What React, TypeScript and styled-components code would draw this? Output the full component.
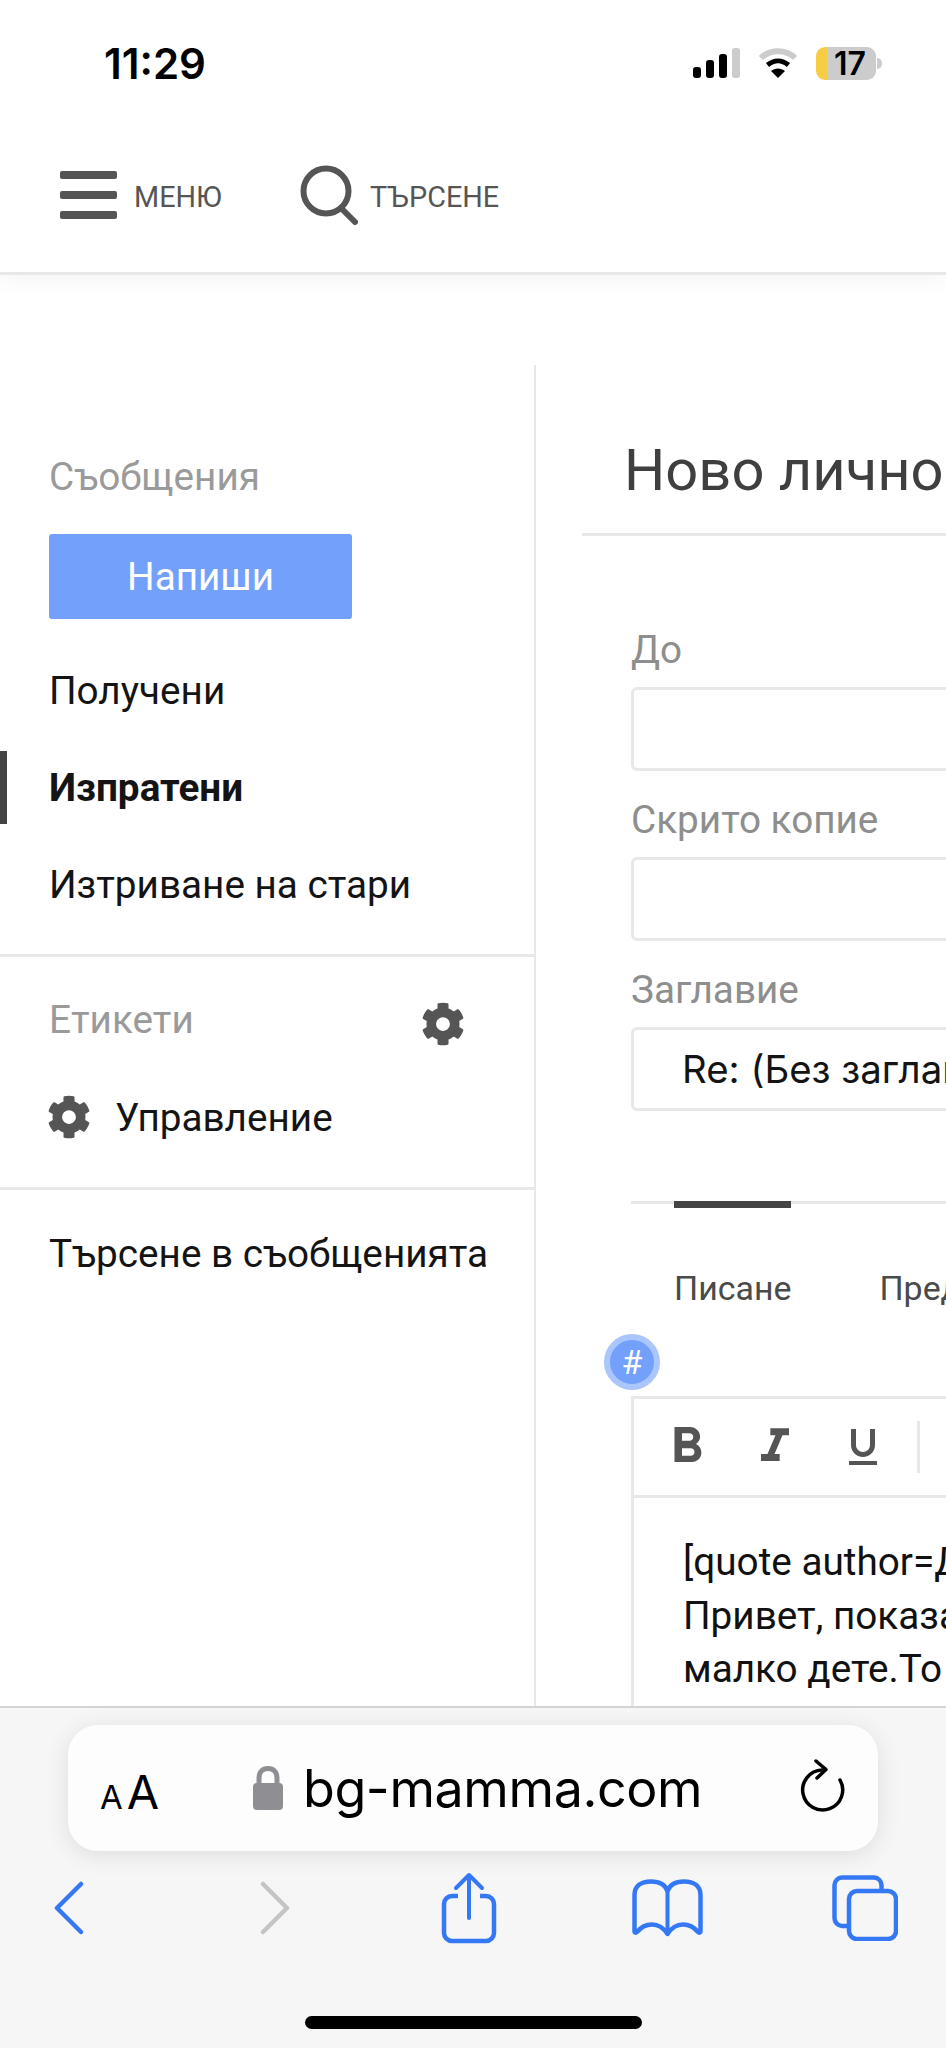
import React from "react";
import styled, { createGlobalStyle } from "styled-components";
import { FaCog } from "react-icons/fa";
import { MdFormatBold, MdFormatItalic, MdFormatUnderlined } from "react-icons/md";

const BLUE = "#3478f6";
const LINE = "#e8e8e8";

const GlobalStyle = createGlobalStyle`
  html, body {
    margin: 0;
    padding: 0;
    background: #ffffff;
    overflow: hidden;
  }
  body {
    font-family: Roboto, "Noto Sans", sans-serif;
    color: #141414;
  }
`;

const Page = styled.div`
  width: 946px;
  height: 2048px;
  display: flex;
  flex-direction: column;
  overflow: hidden;
`;

const TopArea = styled.header`
  position: relative;
  z-index: 1;
  height: 272px;
  flex: none;
  background: #ffffff;
  border-bottom: 3px solid ${LINE};
  box-shadow: 0 4px 24px rgba(0, 0, 0, 0.05);
`;

const StatusBar = styled.div`
  height: 126px;
  display: flex;
  align-items: center;
  padding: 0 70px 0 104px;
  box-sizing: border-box;
`;

const Time = styled.div`
  font-family: Inter, sans-serif;
  font-weight: 600;
  font-size: 42px;
  color: #000;
`;

const StatusIcons = styled.div`
  margin-left: auto;
  display: flex;
  align-items: center;
  gap: 18px;
`;

const Battery = styled.div`
  position: relative;
  width: 60px;
  height: 33px;
  border-radius: 9px;
  background: linear-gradient(90deg, #f7cd45 11px, #cccccc 11px);
  display: flex;
  align-items: center;
  justify-content: center;
  padding-left: 8px;
  box-sizing: border-box;
  font-family: Inter, sans-serif;
  font-weight: 600;
  font-size: 32px;
  color: #000;

  &::after {
    content: "";
    position: absolute;
    right: -6px;
    top: 11px;
    width: 5px;
    height: 11px;
    border-radius: 0 5px 5px 0;
    background: #cccccc;
  }
`;

const Nav = styled.nav`
  height: 146px;
  display: flex;
  align-items: center;
  padding: 0 0 8px 60px;
  box-sizing: border-box;
`;

const NavItem = styled.div<{ $gap: number; $width: number }>`
  display: flex;
  align-items: center;
  gap: ${(p) => p.$gap}px;
  width: ${(p) => p.$width}px;
  flex: none;
`;

const NavLabel = styled.span`
  font-size: 28.8px;
  color: #555555;
  padding-top: 4px;
`;

const Body = styled.div`
  flex: 1;
  min-height: 0;
  display: flex;
  padding-top: 90px;
  overflow: hidden;
`;

const Sidebar = styled.aside`
  width: 536px;
  flex: none;
  box-sizing: border-box;
  border-right: 2px solid ${LINE};
`;

const SideSection = styled.section`
  padding-bottom: 21px;
  border-bottom: 3px solid ${LINE};
`;

const SectionTitle = styled.div<{ $top: number }>`
  font-size: 38.7px;
  line-height: 44px;
  color: #9a9a9a;
  padding: ${(p) => p.$top}px 0 0 49px;
`;

const WriteButton = styled.div`
  width: 303px;
  height: 85px;
  margin: 35px 0 23px 49px;
  border-radius: 3px;
  background: #72a0fb;
  color: #ffffff;
  font-size: 38.7px;
  display: flex;
  align-items: center;
  justify-content: center;
`;

const SideLink = styled.div<{ $active?: boolean; $height?: number; $top?: number }>`
  height: ${(p) => p.$height ?? 97}px;
  box-sizing: border-box;
  padding: ${(p) => p.$top ?? 0}px 0 0 49px;
  display: flex;
  align-items: center;
  gap: 24px;
  font-size: 38.7px;
  font-weight: ${(p) => (p.$active ? 700 : 400)};
  position: relative;

  &::before {
    content: "";
    display: ${(p) => (p.$active ? "block" : "none")};
    position: absolute;
    left: 0;
    top: 12px;
    bottom: 12px;
    width: 7px;
    background: #444444;
  }
`;

const LabelRow = styled.div`
  display: flex;
  align-items: flex-start;
  justify-content: space-between;
  padding-right: 69px;
`;

const HeadGear = styled(FaCog)`
  margin-top: 45px;
  color: #555555;
`;

const LinkGear = styled(FaCog)`
  margin-left: -2px;
  color: #555555;
`;

const LabelsSection = styled.section`
  border-bottom: 3px solid ${LINE};
`;

const Main = styled.main`
  flex: 1;
  min-width: 0;
  overflow: hidden;
  padding: 74px 0 0 46px;
`;

const Title = styled.h1`
  margin: 0;
  height: 97px;
  box-sizing: border-box;
  width: 600px;
  font-size: 57.9px;
  line-height: 62px;
  font-weight: 400;
  white-space: nowrap;
  color: #3f3f3f;
  padding: 0 0 0 42px;
  border-bottom: 3px solid ${LINE};
`;

const Form = styled.form`
  margin-left: 49px;
  width: 600px;
  padding-top: 94px;
`;

const Field = styled.div`
  margin-bottom: 29px;
`;

const FieldLabel = styled.label`
  display: block;
  font-size: 38.7px;
  line-height: 40px;
  margin-bottom: 17px;
  color: #8e8e8e;
`;

const InputBox = styled.div`
  height: 84px;
  box-sizing: border-box;
  border: 3px solid ${LINE};
  border-radius: 6px;
  display: flex;
  align-items: center;
  padding-left: 48px;
  font-family: Inter, sans-serif;
  font-size: 38.4px;
  white-space: nowrap;
  overflow: hidden;
`;

const TabRow = styled.div`
  display: flex;
  gap: 88px;
  margin-top: 90px;
  padding-left: 43px;
  border-top: 3px solid ${LINE};
`;

const Tab = styled.div<{ $active?: boolean }>`
  margin-top: -3px;
  padding-top: 61px;
  font-size: 33.9px;
  line-height: 40px;
  white-space: nowrap;
  color: #4a4a4a;
  border-top: 7px solid ${(p) => (p.$active ? "#444444" : "transparent")};
`;

const Editor = styled.div`
  position: relative;
  margin-top: 87px;
  border: 3px solid ${LINE};
  border-right: none;
  height: 500px;
`;

const HashBadge = styled.div`
  position: absolute;
  left: -30px;
  top: -65px;
  width: 44px;
  height: 44px;
  border-radius: 50%;
  border: 6px solid #aac6fc;
  background: #72a0fb;
  color: #ffffff;
  font-size: 34px;
  display: flex;
  align-items: center;
  justify-content: center;
`;

const Toolbar = styled.div`
  height: 96px;
  display: flex;
  align-items: center;
  padding-left: 9px;
  border-bottom: 3px solid ${LINE};
`;

const ToolButton = styled.div`
  width: 88px;
  display: flex;
  justify-content: center;
  color: #555555;
`;

const ToolDivider = styled.div`
  width: 3px;
  height: 52px;
  margin-left: 10px;
  background: ${LINE};
`;

const EditorText = styled.div`
  padding: 37px 0 0 49px;
  font-size: 38.7px;
  line-height: 53.5px;
  white-space: nowrap;
  color: #111111;
`;

const SafariBar = styled.footer`
  position: relative;
  z-index: 2;
  height: 342px;
  flex: none;
  box-sizing: border-box;
  border-top: 2px solid #d4d4d4;
  background: #f6f6f6;
  padding-top: 17px;
  display: flex;
  flex-direction: column;
`;

const UrlPill = styled.div`
  width: 810px;
  height: 126px;
  margin-left: 68px;
  box-sizing: border-box;
  padding: 0 33px 0 32px;
  border-radius: 30px;
  background: #fdfdfd;
  box-shadow: 0 4px 24px rgba(0, 0, 0, 0.1);
  display: flex;
  align-items: center;
  justify-content: space-between;
  color: #000;
`;

const TextSize = styled.div`
  display: flex;
  align-items: baseline;
  gap: 4px;
  font-family: Inter, sans-serif;
  font-size: 47px;
  padding-top: 6px;
`;

const SmallA = styled.span`
  font-size: 33px;
`;

const Address = styled.div`
  display: flex;
  align-items: center;
  gap: 20px;
  margin-right: 4px;
  font-family: Inter, sans-serif;
  font-size: 52px;
  letter-spacing: -0.4px;
`;

const ReloadSlot = styled.div`
  display: flex;
  margin-top: -5px;
`;

const BrowserActions = styled.div`
  display: grid;
  grid-template-columns: 138px 274px 114px 282px 114px;
  justify-items: center;
  align-items: center;
  height: 76px;
  margin-top: 19px;
`;

const HomeIndicator = styled.div`
  width: 337px;
  height: 13px;
  margin: auto 0 19px 305px;
  border-radius: 7px;
  background: #000;
`;

const SignalIcon = () => (
  <svg width="47" height="30" viewBox="0 0 47 30">
    <rect x="0" y="19" width="8" height="11" rx="3" fill="#000" />
    <rect x="13" y="12" width="8" height="18" rx="3" fill="#000" />
    <rect x="26" y="6" width="8" height="24" rx="3" fill="#000" />
    <rect x="39" y="0" width="8" height="30" rx="3" fill="#ccc" />
  </svg>
);

const WifiIcon = () => (
  <svg width="40" height="30" viewBox="0 0 40 30">
    <path d="M3 10C12 1 28 1 37 10" fill="none" stroke="#ccc" strokeWidth="6" />
    <path d="M9.5 17C16 11.5 24 11.5 30.5 17" fill="none" stroke="#000" strokeWidth="5" />
    <path d="M20 30L13 23C17 19.5 23 19.5 27 23Z" fill="#000" />
  </svg>
);

const MenuIcon = () => (
  <svg width="57" height="48" viewBox="0 0 57 48">
    <rect x="0" y="0" width="57" height="8" rx="2" fill="#555" />
    <rect x="0" y="20" width="57" height="8" rx="2" fill="#555" />
    <rect x="0" y="40" width="57" height="8" rx="2" fill="#555" />
  </svg>
);

const SearchIcon = () => (
  <svg width="58" height="60" viewBox="0 0 58 60">
    <circle cx="26" cy="26" r="22.5" fill="none" stroke="#555" strokeWidth="6" />
    <path d="M41 43L55 57" fill="none" stroke="#555" strokeWidth="6" strokeLinecap="round" />
  </svg>
);

const LockIcon = () => (
  <svg width="30" height="44" viewBox="0 0 30 44">
    <path d="M6 20V12C6 6 9.5 2.5 15 2.5S24 6 24 12V20" fill="none" stroke="#8e8e93" strokeWidth="5" />
    <rect x="0" y="17" width="30" height="27" rx="4" fill="#8e8e93" />
  </svg>
);

const ReloadIcon = () => (
  <svg width="45" height="53" viewBox="0 0 45 53">
    <path d="M22 11A20 20 0 1 0 40 21" fill="none" stroke="#000" strokeWidth="3.5" strokeLinecap="round" />
    <path d="M16 2L26 10.5L17 19" fill="none" stroke="#000" strokeWidth="3.5" strokeLinecap="round" strokeLinejoin="round" />
  </svg>
);

const Chevron = ({ dir, color }: { dir: "left" | "right"; color: string }) => (
  <svg width="30" height="54" viewBox="0 0 30 54">
    <path
      d={dir === "left" ? "M27 3L3 27L27 51" : "M3 3L27 27L3 51"}
      fill="none"
      stroke={color}
      strokeWidth="4.5"
      strokeLinecap="round"
      strokeLinejoin="round"
    />
  </svg>
);

const ShareIcon = () => (
  <svg width="56" height="72" viewBox="0 0 56 72">
    <path
      d="M17 24H11A8 8 0 0 0 3 32V61A8 8 0 0 0 11 69H45A8 8 0 0 0 53 61V32A8 8 0 0 0 45 24H39"
      fill="none"
      stroke={BLUE}
      strokeWidth="4.5"
    />
    <path d="M28 3V46M15 16L28 3L41 16" fill="none" stroke={BLUE} strokeWidth="4" strokeLinecap="round" strokeLinejoin="round" />
  </svg>
);

const BookIcon = () => (
  <svg width="71" height="58" viewBox="0 0 71 58">
    <path
      d="M35.5 12C33 5 27 2.5 19 2.5C9 2.5 2.5 7 2.5 16V52C2.5 54 4 54 5 53C9 48 14 45.5 20 45.5C27 45.5 32 49.5 35.5 55C39 49.5 44 45.5 51 45.5C57 45.5 62 48 66 53C67 54 68.5 54 68.5 52V16C68.5 7 62 2.5 52 2.5C44 2.5 38 5 35.5 12Z"
      fill="none"
      stroke={BLUE}
      strokeWidth="4.5"
      strokeLinejoin="round"
    />
    <path d="M35.5 12V54" fill="none" stroke={BLUE} strokeWidth="4" />
  </svg>
);

const TabsIcon = () => (
  <svg width="66" height="66" viewBox="0 0 66 66">
    <path
      d="M15 51H10A8 8 0 0 1 2.5 43V10A8 8 0 0 1 10 2.5H42A8 8 0 0 1 49.5 10V15"
      fill="none"
      stroke={BLUE}
      strokeWidth="4.5"
    />
    <rect x="17" y="16" width="47" height="48" rx="8" fill="none" stroke={BLUE} strokeWidth="4.5" />
  </svg>
);

const App = () => {
  return (
    <Page>
      <GlobalStyle />
      <TopArea>
        <StatusBar>
          <Time>11:29</Time>
          <StatusIcons>
            <SignalIcon />
            <WifiIcon />
            <Battery>17</Battery>
          </StatusIcons>
        </StatusBar>
        <Nav>
          <NavItem $gap={17} $width={240}>
            <MenuIcon />
            <NavLabel>МЕНЮ</NavLabel>
          </NavItem>
          <NavItem $gap={12} $width={300}>
            <SearchIcon />
            <NavLabel>ТЪРСЕНЕ</NavLabel>
          </NavItem>
        </Nav>
      </TopArea>

      <Body>
        <Sidebar>
          <SideSection>
            <SectionTitle $top={90}>Съобщения</SectionTitle>
            <WriteButton>Напиши</WriteButton>
            <SideLink>Получени</SideLink>
            <SideLink $active>Изпратени</SideLink>
            <SideLink>Изтриване на стари</SideLink>
          </SideSection>
          <LabelsSection>
            <LabelRow>
              <SectionTitle $top={41}>Етикети</SectionTitle>
              <HeadGear size={44} />
            </LabelRow>
            <SideLink $height={141} $top={1}>
              <LinkGear size={44} />
              Управление
            </SideLink>
          </LabelsSection>
          <SideLink $height={126}>Търсене в съобщенията</SideLink>
        </Sidebar>

        <Main>
          <Title>Ново лично съобщение</Title>
          <Form>
            <Field>
              <FieldLabel>До</FieldLabel>
              <InputBox />
            </Field>
            <Field>
              <FieldLabel>Скрито копие</FieldLabel>
              <InputBox />
            </Field>
            <Field>
              <FieldLabel>Заглавие</FieldLabel>
              <InputBox lang="bg">Re: (Без заглавие)</InputBox>
            </Field>
            <TabRow>
              <Tab $active>Писане</Tab>
              <Tab>Предварителен преглед</Tab>
            </TabRow>
            <Editor>
              <HashBadge>#</HashBadge>
              <Toolbar>
                <ToolButton>
                  <MdFormatBold size={60} />
                </ToolButton>
                <ToolButton>
                  <MdFormatItalic size={56} />
                </ToolButton>
                <ToolButton>
                  <MdFormatUnderlined size={48} />
                </ToolButton>
                <ToolDivider />
              </Toolbar>
              <EditorText>
                [quote author=Д
                <br />
                Привет, показа
                <br />
                малко дете.То
                <br />
                Т
              </EditorText>
            </Editor>
          </Form>
        </Main>
      </Body>

      <SafariBar>
        <UrlPill>
          <TextSize>
            <SmallA>A</SmallA>A
          </TextSize>
          <Address>
            <LockIcon />
            bg-mamma.com
          </Address>
          <ReloadSlot>
            <ReloadIcon />
          </ReloadSlot>
        </UrlPill>
        <BrowserActions>
          <Chevron dir="left" color={BLUE} />
          <Chevron dir="right" color="#c4c4c4" />
          <ShareIcon />
          <BookIcon />
          <TabsIcon />
        </BrowserActions>
        <HomeIndicator />
      </SafariBar>
    </Page>
  );
};

export default App;
